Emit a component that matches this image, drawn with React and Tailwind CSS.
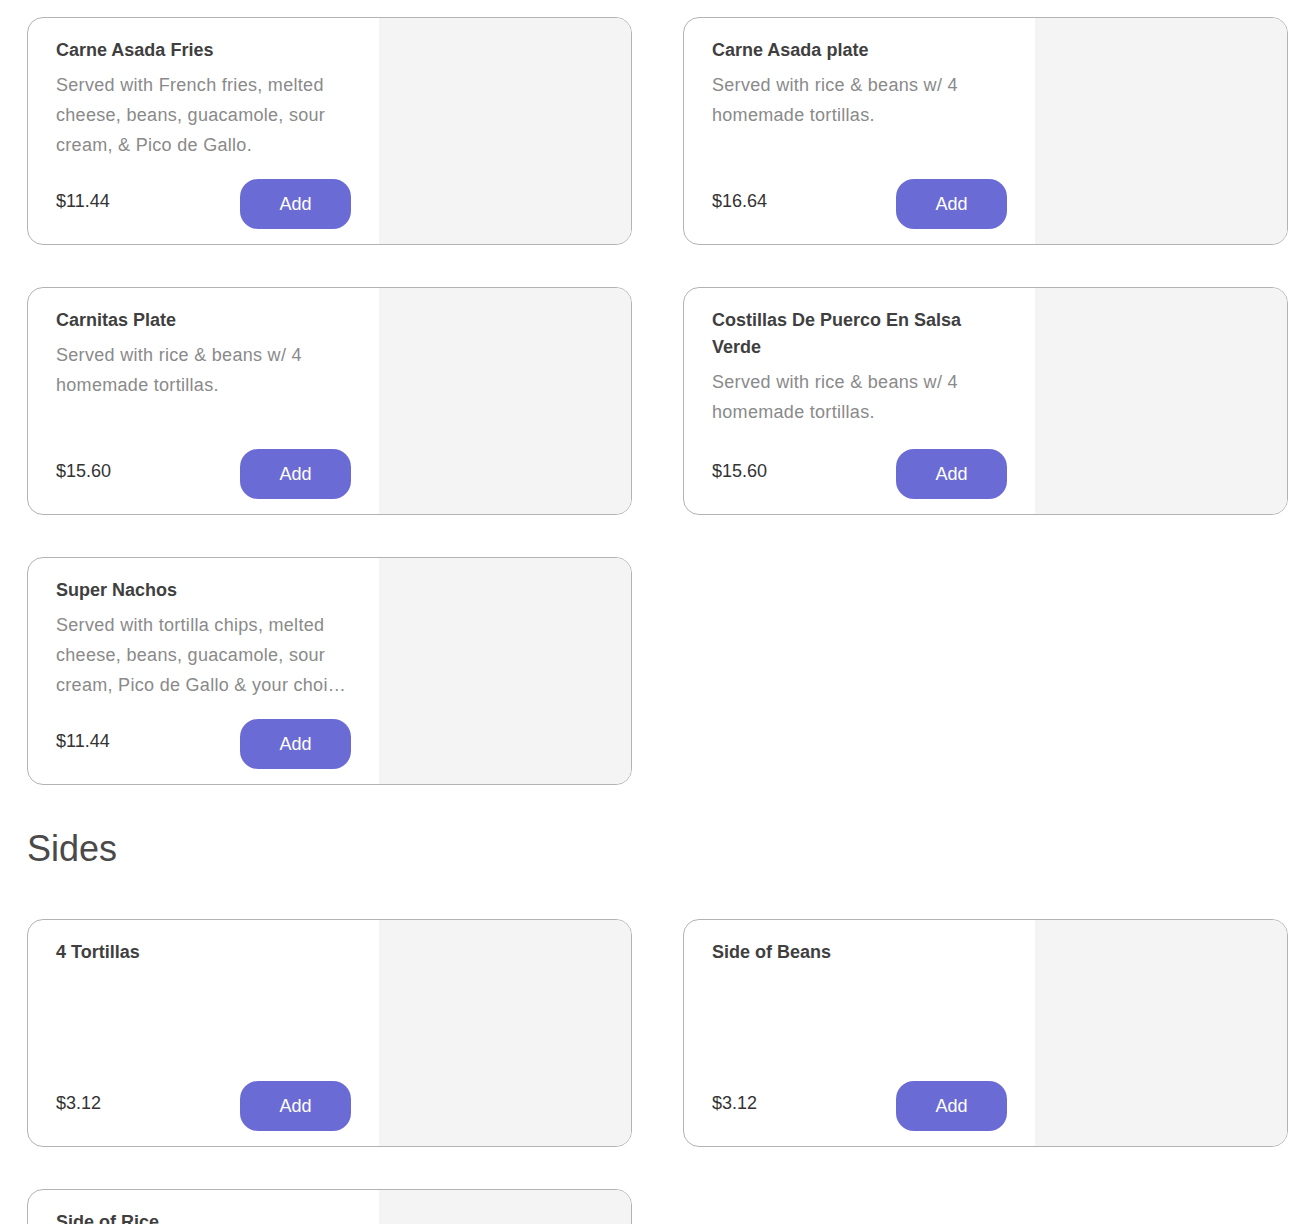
const mains = [
  {
    name: "Carne Asada Fries",
    description:
      "Served with French fries, melted cheese, beans, guacamole, sour cream, & Pico de Gallo.",
    price: "$11.44",
  },
  {
    name: "Carne Asada plate",
    description: "Served with rice & beans w/ 4 homemade tortillas.",
    price: "$16.64",
  },
  {
    name: "Carnitas Plate",
    description: "Served with rice & beans w/ 4 homemade tortillas.",
    price: "$15.60",
  },
  {
    name: "Costillas De Puerco En Salsa Verde",
    description: "Served with rice & beans w/ 4 homemade tortillas.",
    price: "$15.60",
  },
  {
    name: "Super Nachos",
    description:
      "Served with tortilla chips, melted cheese, beans, guacamole, sour cream, Pico de Gallo & your choice of meat.",
    price: "$11.44",
  },
];

const sides = [
  { name: "4 Tortillas", description: "", price: "$3.12" },
  { name: "Side of Beans", description: "", price: "$3.12" },
  { name: "Side of Rice", description: "", price: "$3.12" },
];

function MenuCard({ item }) {
  return (
    <div className="flex h-[228px] overflow-hidden rounded-[16px] border border-[#b3b3b3] bg-white">
      <div className="flex w-[351px] shrink-0 flex-col px-[28px] pt-[19px] pb-[15px]">
        <h3 className="text-[18px] font-bold leading-[27px] text-[#3f3f3f]">
          {item.name}
        </h3>
        {item.description && (
          <p className="mt-[6px] line-clamp-3 text-[18px] leading-[30px] tracking-[0.3px] text-[#8a8a8a]">
            {item.description}
          </p>
        )}
        <div className="mt-auto flex items-center justify-between">
          <span className="-mt-[5px] text-[18px] leading-[27px] text-[#333333]">
            {item.price}
          </span>
          <button
            type="button"
            className="h-[50px] w-[111px] rounded-[18px] bg-[#6b6bd6] text-[18px] text-white"
          >
            Add
          </button>
        </div>
      </div>
      <div className="flex-1 bg-[#f4f4f4]" />
    </div>
  );
}

export default function App() {
  return (
    <div
      className="min-h-screen bg-white pl-[27px] pr-[26px] pt-[17px] pb-10"
      style={{ fontFamily: '"Liberation Sans", Arial, sans-serif' }}
    >
      <div className="grid grid-cols-2 gap-x-[51px] gap-y-[42px]">
        {mains.map((item) => (
          <MenuCard key={item.name} item={item} />
        ))}
      </div>

      <h2 className="mt-[42px] mb-[48px] text-[36px] leading-[44px] text-[#4a4a4a]">
        Sides
      </h2>

      <div className="grid grid-cols-2 gap-x-[51px] gap-y-[42px]">
        {sides.map((item) => (
          <MenuCard key={item.name} item={item} />
        ))}
      </div>
    </div>
  );
}
